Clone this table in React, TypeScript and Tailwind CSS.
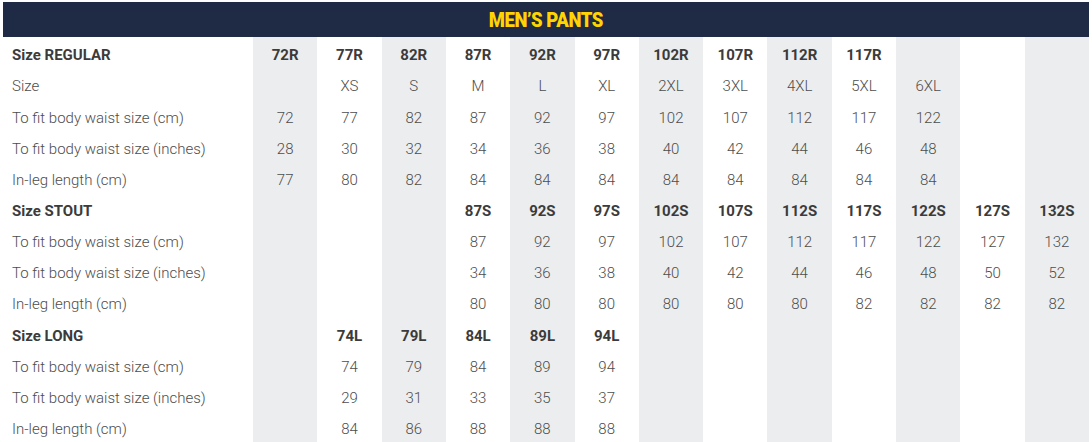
const sections = [
  {
    title: "Size REGULAR",
    codes: ["72R", "77R", "82R", "87R", "92R", "97R", "102R", "107R", "112R", "117R", "", "", ""],
    rows: [
      { label: "Size", values: ["", "XS", "S", "M", "L", "XL", "2XL", "3XL", "4XL", "5XL", "6XL", "", ""] },
      { label: "To fit body waist size (cm)", values: ["72", "77", "82", "87", "92", "97", "102", "107", "112", "117", "122", "", ""] },
      { label: "To fit body waist size (inches)", values: ["28", "30", "32", "34", "36", "38", "40", "42", "44", "46", "48", "", ""] },
      { label: "In-leg length (cm)", values: ["77", "80", "82", "84", "84", "84", "84", "84", "84", "84", "84", "", ""] },
    ],
  },
  {
    title: "Size STOUT",
    codes: ["", "", "", "87S", "92S", "97S", "102S", "107S", "112S", "117S", "122S", "127S", "132S"],
    rows: [
      { label: "To fit body waist size (cm)", values: ["", "", "", "87", "92", "97", "102", "107", "112", "117", "122", "127", "132"] },
      { label: "To fit body waist size (inches)", values: ["", "", "", "34", "36", "38", "40", "42", "44", "46", "48", "50", "52"] },
      { label: "In-leg length (cm)", values: ["", "", "", "80", "80", "80", "80", "80", "80", "82", "82", "82", "82"] },
    ],
  },
  {
    title: "Size LONG",
    codes: ["", "74L", "79L", "84L", "89L", "94L", "", "", "", "", "", "", ""],
    rows: [
      { label: "To fit body waist size (cm)", values: ["", "74", "79", "84", "89", "94", "", "", "", "", "", "", ""] },
      { label: "To fit body waist size (inches)", values: ["", "29", "31", "33", "35", "37", "", "", "", "", "", "", ""] },
      { label: "In-leg length (cm)", values: ["", "84", "86", "88", "88", "88", "", "", "", "", "", "", ""] },
    ],
  },
];

const Row = ({ label, values, bold }: { label: string; values: string[]; bold?: boolean }) => (
  <div className="grid grid-cols-[250px_repeat(13,minmax(0,1fr))] h-[31.15px]">
    <div
      className={
        bold
          ? "flex items-center pl-[9px] pt-[6px] font-bold text-[#3b3b3b]"
          : "flex items-center pl-[9px] pt-[6px] font-light text-[#4d4d4d]"
      }
    >
      {label}
    </div>
    {values.map((v, i) => (
      <div
        key={i}
        className={
          (i % 2 === 0 ? "bg-[#ecedef] " : "") +
          (bold
            ? "flex items-center justify-center pt-[6px] font-bold text-[#3b3b3b]"
            : "flex items-center justify-center pt-[6px] font-light text-[#4d4d4d]")
        }
      >
        {v}
      </div>
    ))}
  </div>
);

export default function App() {
  return (
    <div className="w-[1092px] h-[442px] overflow-hidden bg-white pt-[2px] pl-[3px] pr-[3px] font-['Roboto',sans-serif] text-[15px]">
      <div className="h-[35px] bg-[#1f2a44] flex items-center justify-center">
        <h2 className="text-[#ffd400] font-black text-[21px] leading-none tracking-[-0.5px] uppercase scale-x-[0.88] pt-[2px]">
          MEN’S PANTS
        </h2>
      </div>
      {sections.map((s) => (
        <div key={s.title}>
          <Row label={s.title} values={s.codes} bold />
          {s.rows.map((r, i) => (
            <Row key={i} label={r.label} values={r.values} />
          ))}
        </div>
      ))}
    </div>
  );
}
